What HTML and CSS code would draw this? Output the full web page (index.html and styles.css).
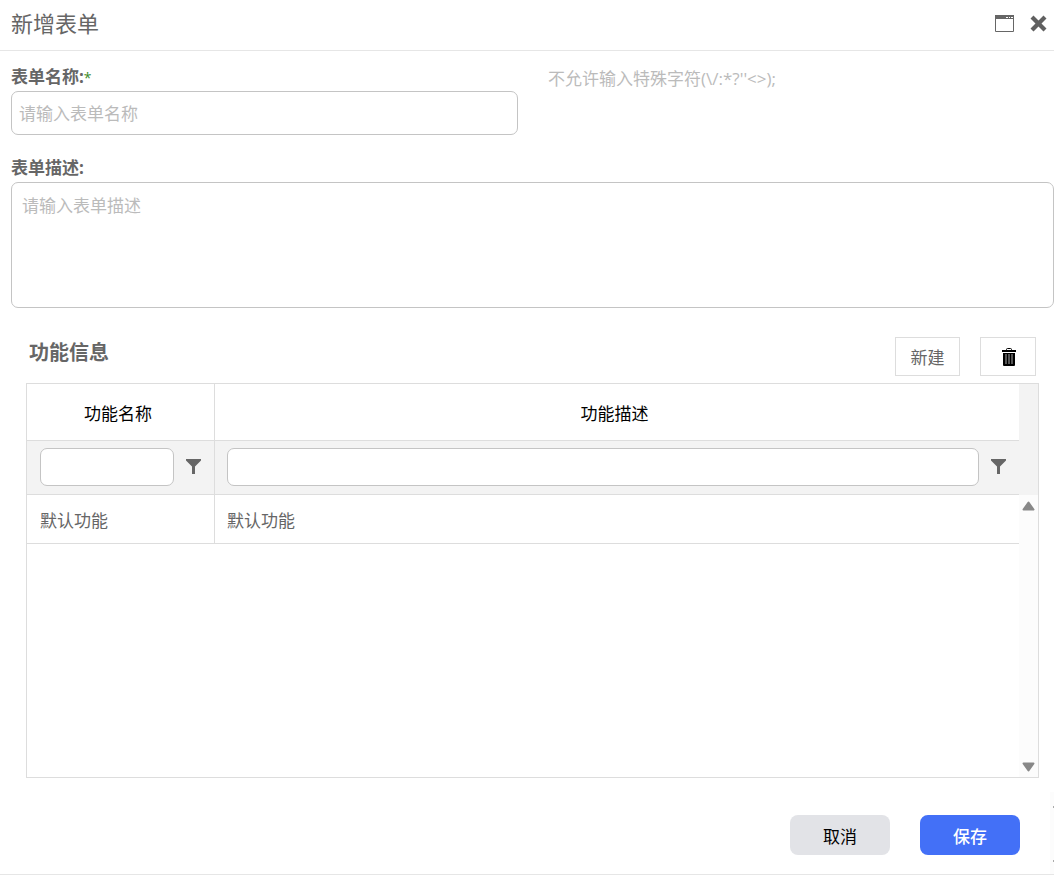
FILE: index.html
```html
<!DOCTYPE html>
<html lang="zh-CN">
<head>
<meta charset="utf-8">
<title>新增表单</title>
<link rel="stylesheet" href="styles.css">
</head>
<body>
<form class="dialog">
  <header class="titlebar">
    <h1 class="title">新增表单</h1>
    <div class="window-actions">
      <button type="button" class="icon-button" aria-label="最大化">
        <svg width="19" height="17" viewBox="0 0 19 17"><path d="M.5.5h18v16H.5z" fill="#fff" stroke="#666"/><path d="M0 0h19v4H0z" fill="#666"/><path d="M11 2h2v1h-2zM14 2h1v1h-1zM16 2h2v1h-2z" fill="#fff"/></svg>
      </button>
      <button type="button" class="icon-button" aria-label="关闭">
        <svg width="17" height="17" viewBox="0 0 17 17"><path d="M3.500 .5l5 5 5-5 3 3-5 5 5 5-3 3-5-5-5 5-3-3 5-5-5-5z" fill="#606060"/></svg>
      </button>
    </div>
  </header>

  <main class="content">
    <div class="name-row">
      <div class="field">
        <label class="label" for="form-name">表单名称:<span class="required">*</span></label>
        <input class="text-input" id="form-name" type="text" placeholder="请输入表单名称">
      </div>
      <p class="hint">不允许输入特殊字符(\/:*?''&lt;&gt;);</p>
    </div>
    <div class="field">
      <label class="label" for="form-desc">表单描述:</label>
      <textarea class="text-area" id="form-desc" placeholder="请输入表单描述"></textarea>
    </div>

    <section class="functions">
      <div class="functions-head">
        <h2 class="section-title">功能信息</h2>
        <div class="tools">
          <button type="button" class="tool new">新建</button>
          <button type="button" class="tool delete" aria-label="删除">
            <svg width="14" height="18" viewBox="0 0 14 18"><path d="M4.500 2.500V1.500q0-1 1-1h3q1 0 1 1v1" fill="none" stroke="#000"/><path d="M0 2h14v2H0zM1 5h12v12q0 1-1 1H2q-1 0-1-1z"/><path d="M4 6v10M7 6v10M10 6v10" stroke="#aaa"/></svg>
          </button>
        </div>
      </div>
      <div class="grid">
        <table class="grid-table">
          <colgroup><col class="name-col"><col></colgroup>
          <thead>
            <tr class="head-row"><th scope="col">功能名称</th><th scope="col">功能描述</th></tr>
            <tr class="filter-row">
              <td><div class="filter"><input type="text" class="filter-input" aria-label="筛选功能名称"><button type="button" class="icon-button" aria-label="功能名称筛选条件"><svg width="16" height="16" viewBox="0 0 16 16"><path d="M0 0h15v1.500L9 7.500V15H6V7.500L0 1.500z" fill="#666"/></svg></button></div></td>
              <td><div class="filter"><input type="text" class="filter-input" aria-label="筛选功能描述"><button type="button" class="icon-button" aria-label="功能描述筛选条件"><svg width="16" height="16" viewBox="0 0 16 16"><path d="M0 0h15v1.500L9 7.500V15H6V7.500L0 1.500z" fill="#666"/></svg></button></div></td>
            </tr>
          </thead>
          <tbody>
            <tr class="data-row"><td>默认功能</td><td>默认功能</td></tr>
          </tbody>
        </table>
        <div class="scroll-column" aria-hidden="true">
          <div class="scroll-head"></div>
          <div class="scroll-track">
            <svg width="13" height="10" viewBox="0 0 13 10"><path d="M6.500 1.500L11.500 8.500H1.500z" fill="#888" stroke="#888" stroke-width="2" stroke-linejoin="round"/></svg>
            <svg width="13" height="10" viewBox="0 0 13 10"><path d="M6.500 8.500L11.500 1.500H1.500z" fill="#888" stroke="#888" stroke-width="2" stroke-linejoin="round"/></svg>
          </div>
        </div>
      </div>
    </section>
  </main>

  <footer class="footer">
    <button type="button" class="action cancel">取消</button>
    <button type="submit" class="action save">保存</button>
    <div class="footer-scroll" aria-hidden="true"><i></i><i></i></div>
  </footer>
</form>
</body>
</html>
```

FILE: styles.css
```css
* { box-sizing: border-box; }

body {
  margin: 0;
  background: #fff;
  color: #666;
  font: 17px/24px "Open Sans", "Noto Sans CJK SC", sans-serif;
}

button, input, textarea { font: inherit; color: inherit; }
button { cursor: pointer; }
svg { display: block; }

.dialog { border-bottom: 1px solid #e6e6e6; }

.titlebar {
  display: flex;
  align-items: center;
  justify-content: space-between;
  height: 51px;
  padding: 0 7px 4px 11px;
  border-bottom: 1px solid #e6e6e6;
}
.title { margin: 0; font-size: 22px; line-height: 32px; font-weight: 400; }
.window-actions { display: flex; align-items: center; gap: 16px; }
.icon-button { padding: 0; border: 0; background: none; }

.content { padding: 14px 0 0 11px; }
.name-row {
  display: grid;
  grid-template-columns: 507px 1fr;
  gap: 30px;
  margin-bottom: 21px;
}
.field { display: flex; flex-direction: column; }
.label { height: 26px; font-weight: 700; }
.required { color: #3c8c28; font-size: 14px; font-weight: 400; }
.hint { margin: 2px 0 0; color: #bbb; }

.text-input, .text-area {
  width: 100%;
  border: 1px solid #c4c4c4;
  border-radius: 7px;
  background: #fff;
}
.text-input { height: 44px; padding: 0 7px; }
.text-area { display: block; height: 126px; padding: 11px 10px; resize: none; }
.text-input::placeholder, .text-area::placeholder { color: #bbb; opacity: 1; }

.functions { padding: 29px 15px 0; }
.functions-head {
  display: flex;
  justify-content: space-between;
  height: 46px;
  padding: 0 3px;
}
.section-title { margin: 2px 0 0; font-size: 20px; line-height: 28px; font-weight: 700; }
.tools { display: flex; align-items: flex-start; gap: 20px; }
.tool {
  display: grid;
  place-items: center;
  height: 39px;
  padding: 2px 0 0;
  border: 1px solid #ddd;
  background: #fff;
}
.new { width: 65px; }
.delete { width: 56px; padding: 0 0 0 2px; }

.grid {
  display: grid;
  grid-template-columns: 1fr 19px;
  align-items: start;
  height: 395px;
  border: 1px solid #ddd;
}
.grid-table { width: 100%; table-layout: fixed; border-collapse: separate; border-spacing: 0; }
.name-col { width: 188px; }
.grid-table th, .grid-table td { padding: 0 12px 0 13px; border-bottom: 1px solid #ddd; }
.grid-table tr > :first-child { border-right: 1px solid #ddd; }
.grid-table tr > :last-child { padding-left: 12px; }
.grid-table .head-row th {
  height: 57px;
  padding: 3px 17px 0 12px;
  color: #000;
  font-weight: 400;
  text-align: center;
}
.grid-table .filter-row td { height: 54px; padding-bottom: 2px; background: #f3f3f3; }
.grid-table .data-row td { height: 49px; padding-top: 3px; }
.filter { display: flex; align-items: center; gap: 12px; }
.filter-input {
  flex: 1;
  min-width: 0;
  height: 38px;
  padding: 0 8px;
  border: 1px solid #c4c4c4;
  border-radius: 7px;
  background: #fff;
}
.scroll-column { display: flex; flex-direction: column; height: 100%; }
.scroll-head { height: 111px; background: #f3f3f3; }
.scroll-track {
  flex: 1;
  display: flex;
  flex-direction: column;
  align-items: center;
  justify-content: space-between;
  padding: 6px 0 5px;
  background: #fcfcfc;
}

.footer {
  display: flex;
  justify-content: flex-end;
  align-items: flex-start;
  gap: 30px;
  height: 82px;
  margin-top: 14px;
}
.action {
  width: 100px;
  height: 40px;
  margin-top: 23px;
  padding: 3px 0 0;
  border: 0;
  border-radius: 8px;
}
.cancel { background: #e2e3e7; color: #000; }
.save { background: #4370f7; color: #fff; font-weight: 500; }
.footer-scroll {
  display: flex;
  flex-direction: column;
  justify-content: space-between;
  align-items: flex-end;
  width: 4px;
  height: 100%;
  padding: 14px 0 12px;
  background: #fcfcfc;
}
.footer-scroll i { width: 1px; height: 2px; background: #aaa; }
```
